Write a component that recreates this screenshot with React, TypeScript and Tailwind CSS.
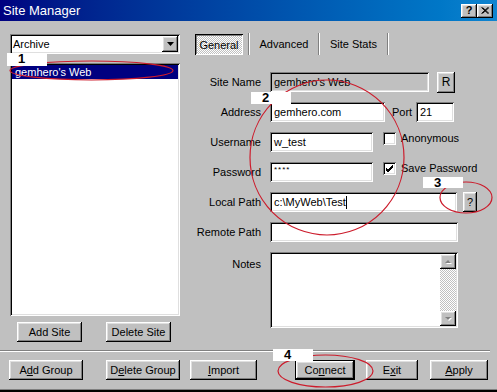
import React from 'react';

const raised =
  'shadow-[inset_-1px_-1px_0_#000000,inset_1px_1px_0_#ffffff,inset_-2px_-2px_0_#808080,inset_2px_2px_0_#dfdfdf]';
const sunken =
  'shadow-[inset_1px_1px_0_#808080,inset_-1px_-1px_0_#ffffff,inset_2px_2px_0_#000000,inset_-2px_-2px_0_#dfdfdf]';

function Btn({ className = '', children, def }: { className?: string; children: React.ReactNode; def?: boolean }) {
  if (def) {
    return (
      <div className={`h-[20px] border border-black ${className}`}>
        <div className={`w-full h-full flex items-center justify-center ${raised}`}>{children}</div>
      </div>
    );
  }
  return <div className={`h-[20px] flex items-center justify-center ${raised} ${className}`}>{children}</div>;
}

function Label({ children }: { children: React.ReactNode }) {
  return <div className="w-[68px] text-right shrink-0">{children}</div>;
}

function Field({ className = '', children, gray }: { className?: string; children?: React.ReactNode; gray?: boolean }) {
  return (
    <div className={`ml-[9px] h-[20px] flex items-center pl-[4px] ${gray ? 'bg-[#c0c0c0]' : 'bg-white'} ${sunken} ${className}`}>
      {children}
    </div>
  );
}

function Check({ checked }: { checked?: boolean }) {
  return (
    <div className={`w-[13px] h-[13px] bg-white ${sunken} flex items-center justify-center`}>
      {checked && (
        <svg width="9" height="9" viewBox="0 0 9 9">
          <path d="M1 4 L3 6 L8 1 M1 5 L3 7 L8 2 M1 6 L3 8 L8 3" stroke="#000" strokeWidth="1" fill="none" />
        </svg>
      )}
    </div>
  );
}

function Sep() {
  return <div className="w-[2px] h-[22px] border-l border-l-[#808080] border-r border-r-white" />;
}

function ScrollArrow({ up }: { up?: boolean }) {
  return (
    <div className={`w-[16px] h-[15px] bg-[#c0c0c0] ${raised} flex items-center justify-center`}>
      <svg width="9" height="6" viewBox="0 0 9 6">
        {up ? (
          <>
            <path d="M2 5 L5 2 L8 5 Z" fill="#ffffff" />
            <path d="M1 4 L4 1 L7 4 Z" fill="#808080" />
          </>
        ) : (
          <>
            <path d="M2 2 L8 2 L5 5 Z" fill="#ffffff" />
            <path d="M1 1 L7 1 L4 4 Z" fill="#808080" />
          </>
        )}
      </svg>
    </div>
  );
}

function Tag({ n, className }: { n: string; className: string }) {
  return (
    <div className={`absolute w-[40px] bg-white pl-[11px] text-[13px] font-bold leading-[12px] ${className}`}>{n}</div>
  );
}

export default function App() {
  return (
    <div className="relative w-[497px] h-[392px] overflow-hidden bg-[#c0c0c0] font-['Liberation_Sans',Arial,sans-serif] text-[11px] text-black flex flex-col">
      {/* title bar */}
      <div className="h-[21px] shrink-0 flex items-center pl-[3px] pr-[4px] bg-linear-to-r from-[#000080] to-[#1084d0]">
        <span className="text-white text-[13px] leading-none">Site Manager</span>
        <div className="ml-auto flex">
          <div className={`w-[16px] h-[14px] bg-[#c0c0c0] ${raised} flex items-center justify-center text-[11px] font-bold leading-none`}>?</div>
          <div className={`w-[16px] h-[14px] bg-[#c0c0c0] ${raised} flex items-center justify-center`}>
            <svg width="8" height="7" viewBox="0 0 8 7">
              <path d="M0.5 0.5 L7 6.5 M1.5 0.5 L8 6.5 M7 0.5 L0.5 6.5 M8 0.5 L1.5 6.5" stroke="#000" strokeWidth="1" />
            </svg>
          </div>
        </div>
      </div>

      <div className="flex shrink-0">
        {/* left column */}
        <div className="ml-[10px] w-[170px] pt-[13px] flex flex-col">
          <div className={`h-[20px] bg-white ${sunken} flex items-center pl-[3px] pr-[2px]`}>
            <span>Archive</span>
            <div className={`ml-auto w-[16px] h-[16px] bg-[#c0c0c0] ${raised} flex items-center justify-center`}>
              <svg width="7" height="4" viewBox="0 0 7 4">
                <path d="M0 0 L7 0 L3.5 4 Z" fill="#000" />
              </svg>
            </div>
          </div>
          <div className={`mt-[9px] h-[253px] bg-white ${sunken} p-[2px]`}>
            <div className="h-[14px] bg-[#000080] text-white pl-[3px] flex items-center">gemhero's Web</div>
          </div>
          <div className="mt-[6px] flex pl-[7px] gap-[24px]">
            <Btn className="w-[65px]">Add Site</Btn>
            <Btn className="w-[65px]">Delete Site</Btn>
          </div>
        </div>

        {/* right column */}
        <div className="ml-[13px] flex-1 pt-[12px] flex flex-col">
          <div className="flex h-[22px] pl-[2px]">
            <div className="w-[48px] h-[21px] mt-[1px] flex items-center justify-center pt-[1px] shadow-[inset_1px_1px_0_#000000,inset_-1px_-1px_0_#ffffff,inset_2px_2px_0_#808080] [background-image:repeating-conic-gradient(#ffffff_0%_25%,#c0c0c0_0%_50%)] [background-size:2px_2px]">
              General
            </div>
            <div className="ml-[5px]"><Sep /></div>
            <div className="w-[68px] flex items-center justify-center">Advanced</div>
            <Sep />
            <div className="w-[67px] flex items-center justify-center">Site Stats</div>
            <Sep />
          </div>

          <div className="mt-[17px] flex flex-col gap-[10px]">
            <div className="flex items-center h-[20px]">
              <Label>Site Name</Label>
              <Field gray className="w-[159px]">gemhero's Web</Field>
              <Btn className="ml-[8px] w-[18px] h-[21px] text-[12px]">R</Btn>
            </div>
            <div className="flex items-center h-[20px]">
              <Label>Address</Label>
              <Field className="w-[115px]">gemhero.com</Field>
              <span className="ml-[7px] w-[20px]">Port</span>
              <div className={`ml-[4px] w-[38px] h-[20px] bg-white ${sunken} flex items-center pl-[4px]`}>21</div>
            </div>
            <div className="flex items-center h-[20px]">
              <Label>Username</Label>
              <Field className="w-[103px]">w_test</Field>
              <div className="ml-[10px] self-start"><Check /></div>
              <span className="ml-[5px] self-start leading-[13px]">Anonymous</span>
            </div>
            <div className="flex items-center h-[20px]">
              <Label>Password</Label>
              <Field className="w-[103px] items-start pt-[4px]">
                <span className="text-[8px] leading-[8px] tracking-[1px]">****</span>
              </Field>
              <div className="ml-[10px] self-start"><Check checked /></div>
              <span className="ml-[5px] self-start leading-[13px]">Save Password</span>
            </div>
            <div className="flex items-center h-[20px]">
              <Label>Local Path</Label>
              <Field className="w-[187px]">
                <span>c:\MyWeb\Test</span>
                <span className="w-[1px] h-[13px] bg-black" />
              </Field>
              <Btn className="ml-[6px] w-[14px] h-[19px]">?</Btn>
            </div>
            <div className="flex items-center h-[20px]">
              <Label>Remote Path</Label>
              <Field className="w-[188px]" />
            </div>
            <div className="flex items-start h-[76px]">
              <div className="pt-[4px]"><Label>Notes</Label></div>
              <div className={`ml-[9px] w-[188px] h-[76px] bg-white ${sunken} flex justify-end p-[2px]`}>
                <div className="w-[16px] h-full flex flex-col [background-image:repeating-conic-gradient(#ffffff_0%_25%,#c0c0c0_0%_50%)] [background-size:2px_2px]">
                  <ScrollArrow up />
                  <div className="flex-1" />
                  <ScrollArrow />
                </div>
              </div>
            </div>
          </div>
        </div>
      </div>

      {/* separator */}
      <div className="mt-[8px] mr-[7px] h-[2px] border-t border-t-[#808080] border-b border-b-white shrink-0" />

      {/* bottom buttons */}
      <div className="mt-[8px] flex pl-[9px] shrink-0">
        <Btn className="w-[74px]">A<u>d</u>d Group</Btn>
        <Btn className="ml-[23px] w-[74px]">D<u>e</u>lete Group</Btn>
        <Btn className="ml-[10px] w-[67px]"><u>I</u>mport</Btn>
        <Btn def className="ml-[38px] w-[60px]">Co<u>n</u>nect</Btn>
        <Btn className="ml-[11px] w-[52px]">E<u>x</u>it</Btn>
        <Btn className="ml-[12px] w-[58px]"><u>A</u>pply</Btn>
      </div>

      <div className="mt-auto h-[3px] border-t border-t-[#808080] bg-black shrink-0" />

      {/* annotations */}
      <svg className="absolute inset-0 pointer-events-none" width="497" height="392" viewBox="0 0 497 392">
        <g stroke="#cc1b2b" strokeWidth="1.2" fill="none">
          <ellipse cx="91.5" cy="70.5" rx="81.5" ry="9.5" />
          <ellipse cx="327" cy="157.5" rx="77" ry="77.5" />
          <ellipse cx="466" cy="197.5" rx="26" ry="15.5" />
          <ellipse cx="325.5" cy="371" rx="47.5" ry="16" />
        </g>
      </svg>
      <Tag n="1" className="left-[7px] top-[53px] h-[13px]" />
      <Tag n="2" className="left-[251px] top-[92px] h-[12px]" />
      <Tag n="3" className="left-[423px] top-[177px] h-[11px] leading-[11px]" />
      <Tag n="4" className="left-[273px] top-[349px] h-[12px]" />
    </div>
  );
}
